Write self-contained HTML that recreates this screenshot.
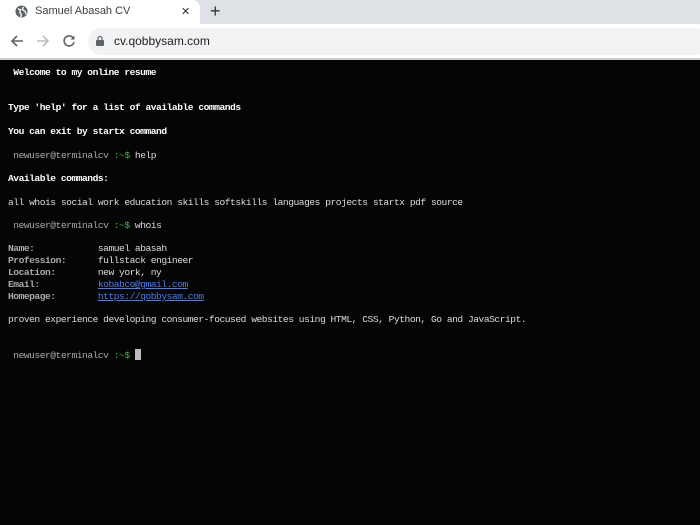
<!DOCTYPE html>
<html><head><meta charset="utf-8"><style>
*{margin:0;padding:0;box-sizing:border-box}
body{width:700px;height:525px;overflow:hidden;background:#050505;font-family:"Liberation Sans",sans-serif}
.tabs{position:absolute;left:0;top:0;width:700px;height:24px;background:#dee1e6}
.tab{position:absolute;left:0;top:0;width:200px;height:24px;background:#fff;border-radius:0 8px 0 0}
.tab .t{position:absolute;left:35px;top:5px;font-size:11px;color:#3c4043}
.tab .x{position:absolute;left:181px;top:5px;font-size:11px;color:#333}
.plus{position:absolute;left:210px;top:1px;font-size:18px;color:#333}
.bar{position:absolute;left:0;top:24px;width:700px;height:34px;background:#fff}
.pill{position:absolute;left:88px;top:4px;width:620px;height:27px;background:#f1f2f4;border-radius:14px}
.url{position:absolute;left:114px;top:10px;font-size:12px;color:#202124}
.sep{position:absolute;left:0;top:58px;width:700px;height:2px;background:#cfcfd2}
.term{position:absolute;left:0;top:60px;width:700px;height:465px;background:#050505;font-family:"Liberation Mono",monospace;font-size:9.6px;letter-spacing:-0.47px;color:#ddd}
.l{position:absolute;left:8px;white-space:pre}
.b{font-weight:bold;color:#fff}
.g{color:#3fb93f}
.p{color:#aaa}
a{color:#4a7cf0;text-decoration:underline}
.cur{display:inline-block;width:6px;height:11px;background:#bbb;vertical-align:-2px}
</style></head><body>
<div class="tabs"><div class="tab">
<svg style="position:absolute;left:15px;top:5px" width="13" height="13" viewBox="0 0 14 14"><circle cx="7" cy="7" r="6.5" fill="#5f6368"/><path d="M3 4 L6 5 L5 8 L7 10 L6 13 M9 2 L8 5 L11 7 L12 10" stroke="#fff" stroke-width="1.4" fill="none"/></svg>
<span class="t">Samuel Abasah CV</span><span class="x">✕</span></div>
<span class="plus">+</span></div>
<div class="bar">
<svg style="position:absolute;left:10px;top:10px" width="14" height="14" viewBox="0 0 14 14"><path d="M13 7H2M7 2L2 7L7 12" stroke="#5f6368" stroke-width="1.6" fill="none"/></svg>
<svg style="position:absolute;left:36px;top:10px" width="14" height="14" viewBox="0 0 14 14"><path d="M1 7H12M7 2L12 7L7 12" stroke="#bbb" stroke-width="1.6" fill="none"/></svg>
<svg style="position:absolute;left:62px;top:10px" width="14" height="14" viewBox="0 0 14 14"><path d="M11.5 4.5A5 5 0 1 0 12 8" stroke="#5f6368" stroke-width="1.6" fill="none"/><path d="M12.5 1.5V5.5H8.5Z" fill="#5f6368"/></svg>
<div class="pill"></div>
<svg style="position:absolute;left:96px;top:12px" width="8" height="10" viewBox="0 0 8 10"><rect x="0" y="4" width="8" height="6" rx="1" fill="#5f6368"/><path d="M2 4V2.5A2 2 0 0 1 6 2.5V4" stroke="#5f6368" stroke-width="1.2" fill="none"/></svg>
<span class="url">cv.qobbysam.com</span>
</div>
<div class="sep"></div>
<div class="term">
<div class="l b" style="top:7px"> Welcome to my online resume</div>
<div class="l b" style="top:42px">Type 'help' for a list of available commands</div>
<div class="l b" style="top:66px">You can exit by startx command</div>
<div class="l" style="top:90px"> <span class="p">newuser@terminalcv</span> <span class="g">:~$</span> help</div>
<div class="l b" style="top:113px">Available commands:</div>
<div class="l" style="top:137px">all whois social work education skills softskills languages projects startx pdf source</div>
<div class="l" style="top:160px"> <span class="p">newuser@terminalcv</span> <span class="g">:~$</span> whois</div>
<div class="l" style="top:183px"><span class="p" style="font-weight:bold">Name:            </span>samuel abasah</div>
<div class="l" style="top:195px"><span class="p" style="font-weight:bold">Profession:      </span>fullstack engineer</div>
<div class="l" style="top:207px"><span class="p" style="font-weight:bold">Location:        </span>new york, ny</div>
<div class="l" style="top:219px"><span class="p" style="font-weight:bold">Email:           </span><a>kobabco@gmail.com</a></div>
<div class="l" style="top:231px"><span class="p" style="font-weight:bold">Homepage:        </span><a>https://qobbysam.com</a></div>
<div class="l" style="top:254px">proven experience developing consumer-focused websites using HTML, CSS, Python, Go and JavaScript.</div>
<div class="l" style="top:289px"> <span class="p">newuser@terminalcv</span> <span class="g">:~$</span> <span class="cur"></span></div>
</div>
</body></html>
